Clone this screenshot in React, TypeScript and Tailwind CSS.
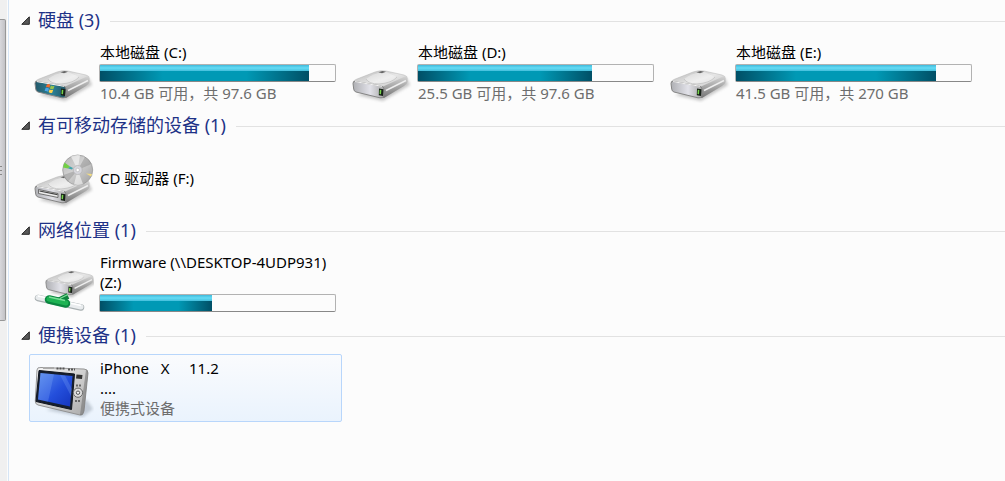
import { useId, useState } from "react";
import type { ReactNode } from "react";

type IconKind = "system" | "drive" | "cd" | "network" | "player";

interface Item {
    icon: IconKind;
    name: string;
    detail?: string;
    /** Share of the volume in use, in percent */
    used?: number;
    selected?: boolean;
}

interface Group {
    title: string;
    items: Item[];
}

const groups: Group[] = [
    {
        title: "硬盘",
        items: [
            { icon: "system", name: "本地磁盘 (C:)", used: 89, detail: "10.4 GB 可用，共 97.6 GB" },
            { icon: "drive", name: "本地磁盘 (D:)", used: 74, detail: "25.5 GB 可用，共 97.6 GB" },
            { icon: "drive", name: "本地磁盘 (E:)", used: 85, detail: "41.5 GB 可用，共 270 GB" },
        ],
    },
    { title: "有可移动存储的设备", items: [{ icon: "cd", name: "CD 驱动器 (F:)" }] },
    {
        title: "网络位置",
        items: [{ icon: "network", name: "Firmware (\\\\DESKTOP-4UDP931)\n(Z:)", used: 47.5 }],
    },
    {
        title: "便携设备",
        items: [{ icon: "player", name: "iPhone   X     11.2\n....", detail: "便携式设备", selected: true }],
    },
];

// Drive enclosure shared by all the disk icons
function DriveBody({ id, system = false }: { id: string; system?: boolean }) {
    return (
        <g>
            <path d="M5 52 L31 58 L58 42 L55 35 Z" fill="#777" opacity="0.4" filter={`url(#${id}-soft)`} />
            <path d="M1 39 Q2 37 5 36 L23 29 Q28 27 34 28 L52 32 Q56 33 55 36 L33 47 L3 41 Z" fill={`url(#${id}-top)`} stroke="#b4b4b4" strokeWidth="0.5" />
            <path d="M31 43.500 L54 33 Q56 34 55.500 39 Q55 41 52 43 L32 55 Q30 55 30 52 Z" fill={`url(#${id}-side)`} />
            <path d="M34 47.500 L54 37.500" stroke="#eee" strokeWidth="1.500" />
            <path d="M14 36 Q15 41 27 41 Q41 40 45 34 L34 29 Q21 30 14 36 Z" fill="#fff" opacity="0.35" />
            <path d="M14 36 Q17 41 27 41 Q40 40 45 34" fill="none" stroke="#c2c2c2" strokeWidth="0.8" />
            <path d="M26.500 29.300 l4 -1.300 l3.500 .8 l-4 1.500 z" fill="#666" />
            <path d="M3 38.500 L29 43 Q32 43.600 32 46 L31.500 53 Q31 55.500 28 54.800 L4 49 Q2 48.500 1.700 46 L1 40.500 Q1 38 3 38.500 Z" fill={system ? `url(#${id}-teal)` : `url(#${id}-face)`} stroke="#858585" strokeWidth="1" />
            <path d="M3 38.600 L30 43.300" stroke="#f4f4f4" strokeWidth="1" />
            {system && (
                <g transform="translate(13 40.500) rotate(10)">
                    <path d="M0 1 Q2 -.5 3.500 1 L3 4 Q1.500 2.800 -.4 4 Z" fill="#f36b2c" />
                    <path d="M4.200 1.300 Q6 2.300 7.800 1 L7.300 4.200 Q5.500 5.300 3.700 4.300 Z" fill="#9ac34b" />
                    <path d="M-.6 4.800 Q1.200 3.700 2.900 4.900 L2.400 8 Q.8 6.900 -1 7.900 Z" fill="#48a5e8" />
                    <path d="M3.600 5.100 Q5.500 6.200 7.200 5 L6.700 8.200 Q5 9.300 3.100 8.200 Z" fill="#ffd34d" />
                </g>
            )}
            <path d="M27 45.500 L31.500 46.200 L31 53 L26.800 52.200 Z" fill="#172018" />
            <path d="M27.800 46.800 l1.500 .3 l-.3 4.200 l-1.500 -.3 z" fill="#76d34b" />
        </g>
    );
}

function ItemIcon({ kind }: { kind: IconKind }) {
    const id = useId();
    let art: ReactNode;

    if (kind === "cd") {
        art = (
            <>
                <DriveBody id={id} />
                <path d="M4.500 41.500 L24 45.500 L24 49.500 L4.500 45.500 Z" fill="#ececec" stroke="#555" strokeWidth="0.8" />
                <path d="M5.500 43 L23.500 46.700" stroke="#444" strokeWidth="1.200" />
                <circle cx="43.700" cy="22" r="15" fill={`url(#${id}-disc)`} stroke="#9b9b9b" strokeWidth="0.8" />
                <path d="M43.700 22 L37 8.600 A15 15 0 0 1 46 7.200 Z M43.700 22 L49 36 A15 15 0 0 1 40 36.500 Z" fill="#fff" opacity="0.55" />
                <path d="M43.700 22 L51 9 A15 15 0 0 1 57.500 16 Z M43.700 22 L29.500 27 A15 15 0 0 0 34 33.500 Z" fill="#777" opacity="0.35" />
                <path d="M30.500 14.500 L36 18.500 L34 20.500 L29 19.500 Z" fill="#71cf45" />
                <path d="M36 18.500 L39 20 L38 21.500 L34 20.500 Z" fill="#42a3ac" />
                <path d="M52 25.500 L58 26 L57 28.500 Z" fill="#f3dc80" />
                <circle cx="43.700" cy="22" r="4.500" fill="#d6d6dc" stroke="#b0b0b0" strokeWidth="0.7" />
                <circle cx="43.700" cy="22" r="1.700" fill="#fff" stroke="#aaa" strokeWidth="0.5" />
            </>
        );
    } else if (kind === "network") {
        art = (
            <>
                <g transform="translate(11 -6) scale(.87)">
                    <DriveBody id={id} />
                </g>
                <path d="M4 45 L47 54.500" stroke="#a9b0b2" strokeWidth="6.500" strokeLinecap="round" />
                <path d="M4 44.500 L47 54" stroke="#e9ecee" strokeWidth="5" strokeLinecap="round" />
                <path d="M4 43 L47 52.500" stroke="#fff" strokeWidth="1.500" />
                <path d="M24 48 L34 43" stroke="#10823c" strokeWidth="6" />
                <path d="M15 46.500 L32 50.500" stroke="#0b8740" strokeWidth="8.500" strokeLinecap="round" />
                <path d="M15 46 L32 50" stroke="#1eb353" strokeWidth="5" strokeLinecap="round" />
                <path d="M15 44 L31 47.500 M26 45.500 L34 41.500" stroke="#7adf98" strokeWidth="1.300" />
            </>
        );
    } else if (kind === "player") {
        art = (
            <>
                <path d="M12 52 L49 59 L59 51 L53 42 Z" fill="#5d6b7c" opacity="0.3" filter={`url(#${id}-soft)`} />
                <path d="M3 12 Q3 9 7 9.500 L50 11 Q54 11 54 15 L50 53 Q49 58 46 57 L4 47 Q1 46 1.300 43 Z" fill={`url(#${id}-case)`} stroke="#8c8c8c" strokeWidth="0.9" />
                <path d="M52 12 Q54 12 54 15 L50 53 Q49 58 46 57 Z" fill="#777" opacity="0.6" />
                <path d="M5 12.500 L40.500 16 L37.500 51.500 L2 43.500 Z" fill="#151e30" stroke="#10151e" strokeWidth="1" />
                <path d="M6.500 15 L38.500 18 L36 48.500 L4 41.500 Z" fill={`url(#${id}-screen)`} />
                <path d="M6.500 15 L20 16.300 L14 43.700 L4 41.500 Z M26 17 L31 17.500 L38 31 L37 38 Z" fill="#96beff" opacity="0.22" />
                <path d="M9 10 h11" stroke="#aaa" strokeWidth="2" />
                <path d="M22.500 10.500 h8 M34 11.500 h7" stroke="#555" strokeWidth="2" strokeDasharray="2 1" />
                <path d="M42.500 16.500 L48.500 17 L48 21 L42 20.500 Z" fill="#333" />
                <circle cx="44" cy="34.700" r="4.600" fill="#ddd" stroke="#666" strokeWidth="1" />
                <circle cx="44" cy="34.700" r="1.700" fill="#f7f7f7" stroke="#555" />
                <path d="M42 27.500 h5 M41 43 h5" stroke="#666" strokeWidth="2" strokeDasharray="2 1" />
            </>
        );
    } else {
        art = <DriveBody id={id} system={kind === "system"} />;
    }

    return (
        <svg viewBox="0 0 60 60" className="size-[60px] shrink-0" aria-hidden="true">
            <defs>
                <linearGradient id={`${id}-top`} x1="0" y1="0" x2="1" y2="1">
                    <stop offset="0%" stopColor="#b4b4b4" />
                    <stop offset="50%" stopColor="#e6e6e6" />
                    <stop offset="100%" stopColor="#bdbdbd" />
                </linearGradient>
                <linearGradient id={`${id}-side`} x1="0" y1="0" x2="0" y2="1">
                    <stop offset="0%" stopColor="#d5d5d5" />
                    <stop offset="100%" stopColor="#757575" />
                </linearGradient>
                <linearGradient id={`${id}-face`}>
                    <stop offset="0%" stopColor="#aeafb3" />
                    <stop offset="55%" stopColor="#e2e2e9" />
                    <stop offset="100%" stopColor="#a8a8a8" />
                </linearGradient>
                <linearGradient id={`${id}-teal`}>
                    <stop offset="0%" stopColor="#24596a" />
                    <stop offset="55%" stopColor="#2c8298" />
                    <stop offset="100%" stopColor="#235463" />
                </linearGradient>
                <linearGradient id={`${id}-disc`} x1="0" y1="0" x2="1" y2="1">
                    <stop offset="0%" stopColor="#b5b5b5" />
                    <stop offset="45%" stopColor="#d2d2d2" />
                    <stop offset="100%" stopColor="#9c9c9c" />
                </linearGradient>
                <linearGradient id={`${id}-case`} x1="0" y1="0" x2="1" y2="1">
                    <stop offset="0%" stopColor="#f7f7f7" />
                    <stop offset="100%" stopColor="#aaa" />
                </linearGradient>
                <linearGradient id={`${id}-screen`} x1="0" y1="0" x2="1" y2="1">
                    <stop offset="0%" stopColor="#5789ec" />
                    <stop offset="55%" stopColor="#244fdc" />
                    <stop offset="100%" stopColor="#1434bd" />
                </linearGradient>
                <filter id={`${id}-soft`} x="-20%" y="-20%" width="140%" height="140%">
                    <feGaussianBlur stdDeviation="1.500" />
                </filter>
            </defs>
            {art}
        </svg>
    );
}

function UsageBar({ used, label }: { used: number; label: string }) {
    return (
        <span
            role="progressbar"
            aria-label={label}
            aria-valuenow={used}
            className="mt-0.5 mb-px block h-[18px] rounded-xs border border-[#b2b2b2] border-b-[#888] bg-[#fcfcfc]"
        >
            <span className="flex h-full flex-col" style={{ width: `${used}%` }}>
                <span className="h-1.5 bg-linear-to-b from-[#40b9db] via-[#65dcf5] to-[#43bedb]" />
                <span className="flex-1 bg-linear-to-r from-[#004f66] via-[#0099b5] via-30% to-[#0099b5] to-70%">
                    <span className="block h-full bg-linear-to-r from-transparent from-70% to-[#004f66]" />
                </span>
            </span>
        </span>
    );
}

function Tile({ item }: { item: Item }) {
    return (
        <button
            type="button"
            className={`flex min-h-[68px] w-full items-center gap-[5px] rounded-xs border py-0.5 pr-[5px] pl-1 text-left ${
                item.selected ? "border-[#b8d6fb] bg-linear-to-b from-[#fafbfd] to-[#eaf3fd]" : "border-transparent"
            }`}
        >
            <ItemIcon kind={item.icon} />
            <span className="min-w-0 flex-1 pb-px text-[15px] leading-5">
                <span className="block pl-px whitespace-pre text-black">{item.name}</span>
                {item.used !== undefined && <UsageBar used={item.used} label={item.name} />}
                {item.detail && <span className="block pl-px whitespace-pre text-[#6d6d6d]">{item.detail}</span>}
            </span>
        </button>
    );
}

function GroupSection({ group }: { group: Group }) {
    const [open, setOpen] = useState(true);

    return (
        <section>
            <h2 className="flex h-6 items-center gap-2.5 text-lg leading-6 text-[#1e3287]">
                <button type="button" aria-expanded={open} onClick={() => setOpen(!open)} className="flex items-center gap-2">
                    <svg viewBox="0 0 9 9" className="size-[9px]" aria-hidden="true">
                        <path d="M8.300 .8 V8.300 H.8 Z" fill="#595959" stroke="#262626" />
                    </svg>
                    {group.title} ({group.items.length})
                </button>
                <span className="mt-0.5 h-px flex-1 bg-[#e2e2e2]" />
            </h2>
            {open && (
                <div className="mt-[7px] ml-2 grid grid-cols-[repeat(auto-fill,313px)] gap-[5px]">
                    {group.items.map((item) => (
                        <Tile key={item.name} item={item} />
                    ))}
                </div>
            )}
        </section>
    );
}

export default function App() {
    return (
        <div className="flex min-h-screen bg-[#fcfcfc] font-['Noto_Sans','Noto_Sans_CJK_SC',sans-serif]">
            {/* Edge of the navigation pane with its scrollbar */}
            <div className="flex w-[9px] shrink-0 border-r border-[#d6e5f5]">
                <div className="flex w-[7px] flex-col bg-[#f0f0f0] pt-[19px]">
                    <div className="flex h-[302px] w-1.5 flex-col items-start justify-center gap-[3px] rounded-r-xs border border-l-0 border-[#979797] bg-linear-to-r from-[#d8d8dc] to-[#c2c2c6]">
                        <span className="h-px w-0.5 bg-[#888]" />
                        <span className="h-px w-0.5 bg-[#888]" />
                        <span className="h-px w-0.5 bg-[#888]" />
                    </div>
                </div>
            </div>
            <main className="flex min-w-0 flex-1 flex-col gap-1.5 pt-2 pl-3">
                {groups.map((group) => (
                    <GroupSection key={group.title} group={group} />
                ))}
            </main>
        </div>
    );
}
